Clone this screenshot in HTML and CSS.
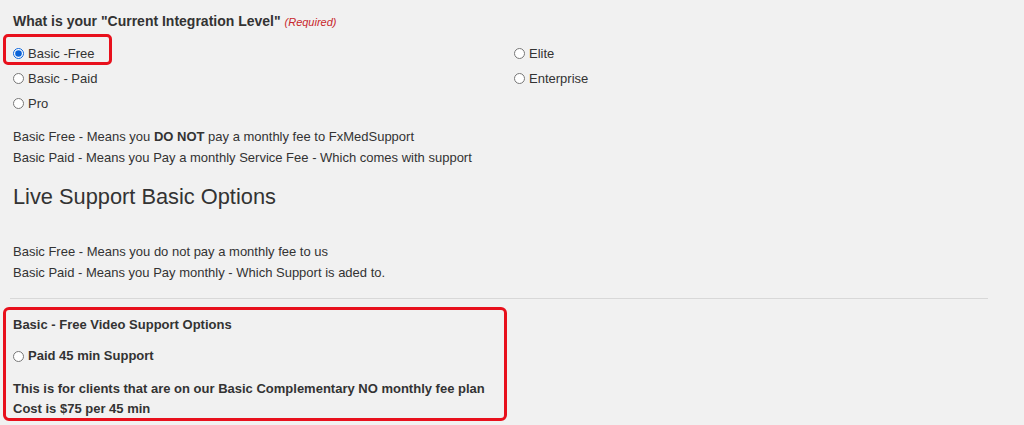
FILE: index.html
```html
<!DOCTYPE html>
<html lang="en">
<head>
  <meta charset="UTF-8" />
  <title>Integration Level</title>
  <link rel="stylesheet" href="styles.css">
</head>
<body>
  <div class="form-wrap">
    <div class="field-label">What is your "Current Integration Level" <span class="required">(Required)</span></div>

    <div class="choices">
      <label class="choice marked"><input type="radio" name="level" checked> Basic -Free</label>
      <label class="choice"><input type="radio" name="level"> Elite</label>
      <label class="choice"><input type="radio" name="level"> Basic - Paid</label>
      <label class="choice"><input type="radio" name="level"> Enterprise</label>
      <label class="choice"><input type="radio" name="level"> Pro</label>
    </div>

    <div class="notes">
      <p>Basic Free - Means you <b>DO NOT</b> pay a monthly fee to FxMedSupport</p>
      <p>Basic Paid - Means you Pay a monthly Service Fee - Which comes with support</p>
    </div>

    <h2>Live Support Basic Options</h2>

    <div class="notes second">
      <p>Basic Free - Means you do not pay a monthly fee to us</p>
      <p>Basic Paid - Means you Pay monthly - Which Support is aded to.</p>
    </div>

    <hr>

    <div class="video-box">
      <div class="box-title">Basic - Free Video Support Options</div>
      <label class="choice bold"><input type="radio" name="video"> Paid 45 min Support</label>
      <p class="box-note">This is for clients that are on our Basic Complementary NO monthly fee plan</p>
      <p class="box-note last">Cost is $75 per 45 min</p>
    </div>
  </div>
</body>
</html>
```

FILE: styles.css
```css
body {
  margin: 0;
  background: #f1f1f1;
  font-family: "Liberation Sans", Arial, sans-serif;
  font-size: 13px;
  color: #333;
}

.form-wrap {
  padding: 0 36px 0 13px;
}

.field-label {
  font-weight: bold;
  font-size: 14px;
  line-height: 20px;
  margin: 11px 0 9px;
}

.required {
  color: #c8262b;
  font-style: italic;
  font-weight: normal;
  font-size: 11px;
}

.choices {
  display: grid;
  grid-template-columns: 501px 1fr;
  grid-auto-rows: 25px;
}

.choice {
  display: flex;
  align-items: center;
  gap: 4px;
  line-height: 20px;
  position: relative;
  width: max-content;
}

.choice input {
  margin: 0;
  width: 11px;
  height: 11px;
  accent-color: #0a63d8;
}

.choice.marked::after {
  content: "";
  position: absolute;
  left: -10px;
  top: -7px;
  width: 103px;
  height: 25px;
  border: 3px solid #e8101c;
  border-radius: 5px;
}

.notes {
  margin-top: 10px;
}

.notes p, .box-note {
  margin: 0;
  line-height: 21px;
}

h2 {
  font-size: 21.8px;
  font-weight: normal;
  line-height: 28px;
  margin: 15px 0 0;
}

.notes.second {
  margin-top: 30px;
}

hr {
  border: none;
  border-top: 1px solid #d8d8d8;
  margin: 15px 0 8px -3px;
}

.video-box {
  width: 491px;
  margin-left: -10px;
  padding: 5px 0 0 7px;
  border: 3px solid #e8101c;
  border-radius: 6px;
}

.box-title, .choice.bold, .box-note {
  font-weight: bold;
}

.box-title {
  line-height: 20px;
}

.choice.bold {
  margin: 11px 0 12px;
}

.box-note.last {
  line-height: 19px;
}
```
